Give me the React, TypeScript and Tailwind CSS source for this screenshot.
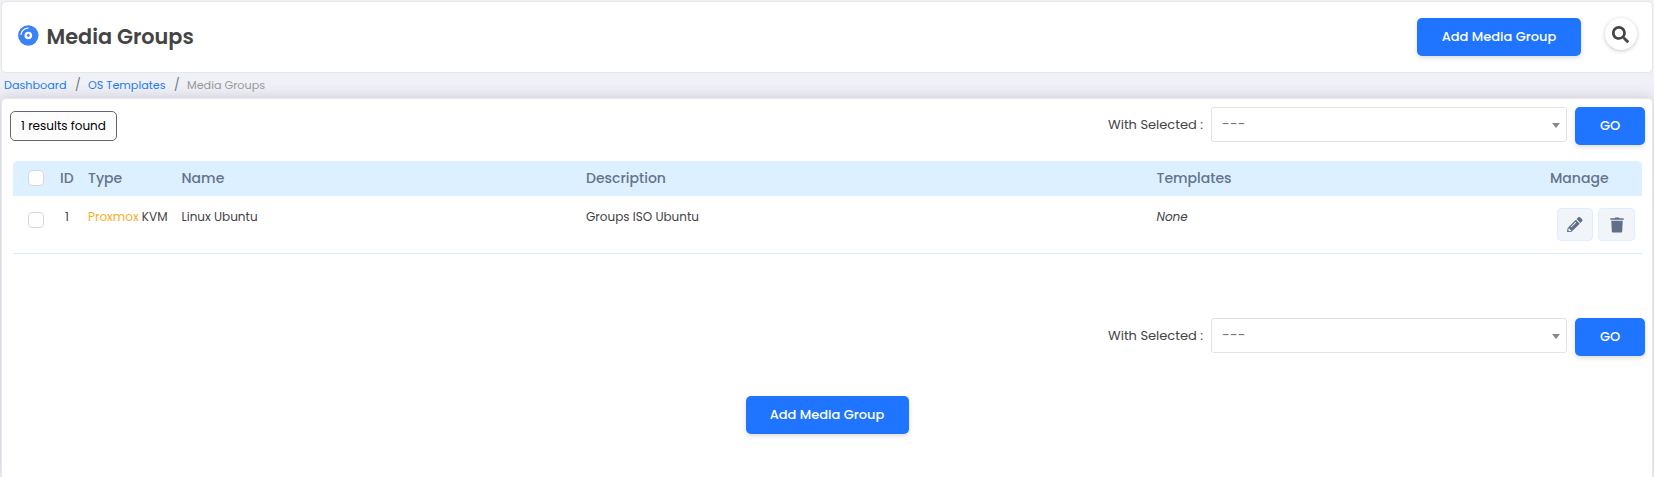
import { FaSearch, FaPencilAlt } from "react-icons/fa";
import type { ReactNode } from "react";

function DiscIcon() {
  return (
    <svg viewBox="0 0 21 21" className="-mt-[3px] h-[21px] w-[21px]" fill="none">
      <circle cx="10.3" cy="10.5" r="10.2" fill="#3b82f6" />
      <circle cx="10.3" cy="10.5" r="3.8" fill="#fff" />
      <circle cx="10.3" cy="10.5" r="1.4" fill="#3b82f6" />
      <path d="M3 9.5a7.5 7.5 0 0 1 7-6.400" stroke="#fff" strokeWidth="1.2" strokeLinecap="round" />
    </svg>
  );
}

function TrashIcon() {
  return (
    <svg viewBox="0 0 14 16" className="h-4 w-[14px]" fill="currentColor">
      <path d="M4.6 1.3 5.2.4h3.6l.6.9h3.9c.3 0 .5.2.5.5v1H.2v-1c0-.3.2-.5.5-.5z" />
      <path d="M1.3 3.8h11.4l-.5 10.5c0 .8-.6 1.3-1.4 1.3H3.2c-.8 0-1.4-.5-1.4-1.3z" />
    </svg>
  );
}

function PrimaryButton({ children, className }: { children: ReactNode; className: string }) {
  return (
    <button
      className={
        "flex h-[38px] shrink-0 items-center justify-center rounded-[5px] bg-[#1f75ff] text-[13px] font-medium text-white shadow-[0_2px_5px_rgba(0,0,0,0.14)] " +
        className
      }
    >
      {children}
    </button>
  );
}

function Checkbox() {
  return <span className="block h-4 w-4 rounded-[4px] border border-[#d5d7da] bg-white" />;
}

function WithSelected() {
  return (
    <div className="flex items-start">
      <span className="mt-2 w-[103px] whitespace-nowrap text-[13px] leading-5 text-[#444]">With Selected :</span>
      <div className="flex h-[35px] w-[356px] items-center justify-between rounded-[3px] border border-[#e2e2e2] bg-white pr-[6px] pl-[10px]">
        <span className="-mt-px text-[14px] tracking-[0.2px] text-[#777]">---</span>
        <span className="mt-0.5 border-x-4 border-t-[5px] border-x-transparent border-t-[#888]" />
      </div>
      <PrimaryButton className="ml-2 w-[70px]">GO</PrimaryButton>
    </div>
  );
}

export default function App() {
  return (
    <div className="flex h-[477px] flex-col overflow-hidden bg-[#f0f1f7] px-px pt-px font-[Poppins,sans-serif] text-[#444]">
      <header className="flex h-[72px] shrink-0 items-start justify-between rounded-[5px] border border-[#e6e6eb] bg-white pt-4 pr-[15px] pl-4">
        <div className="flex items-center pt-[3px]">
          <DiscIcon />
          <h1 className="ml-[7.5px] text-[20.8px] leading-8 font-semibold text-[#444]">Media Groups</h1>
        </div>
        <div className="flex">
          <PrimaryButton className="w-[164px]">Add Media Group</PrimaryButton>
          <button className="ml-6 flex h-8 w-8 items-center justify-center rounded-full bg-white pr-px text-[#444] shadow-[0_1px_4px_rgba(0,0,0,0.22)]">
            <FaSearch size={17} />
          </button>
        </div>
      </header>
      <nav className="flex h-6 shrink-0 items-center pl-[3px] text-[11.2px]">
        <a className="w-[71px] text-[#1d7cf2]">Dashboard</a>
        <span className="w-[13px] text-[12px] text-[#6c757d]">/</span>
        <a className="w-[86px] text-[#1d7cf2]">OS Templates</a>
        <span className="w-[13px] text-[12px] text-[#6c757d]">/</span>
        <span className="text-[#999]">Media Groups</span>
      </nav>
      <main className="mt-px flex flex-1 flex-col rounded-t-[5px] border border-b-0 border-[#e6e6eb] bg-white shadow-[0_0_14px_rgba(60,60,80,0.22)]">
        <div className="flex items-start justify-between pt-2 pr-[7px] pl-2">
          <span className="mt-1 flex h-[30px] w-[107px] items-center justify-center rounded-[5px] border border-[#666] bg-[#fdfdfd] text-[12px] text-black">
            1 results found
          </span>
          <WithSelected />
        </div>
        <table className="mt-4 ml-[11px] w-[1629px] table-fixed border-separate border-spacing-0 text-left">
          <colgroup>
            <col className="w-[47px]" />
            <col className="w-[28px]" />
            <col className="w-[93px]" />
            <col className="w-[405px]" />
            <col className="w-[570px]" />
            <col className="w-[394px]" />
            <col className="w-[92px]" />
          </colgroup>
          <thead>
            <tr className="h-[35px] text-[14px] text-[#64748b] *:bg-[#dcf0ff] *:font-medium">
              <th className="rounded-tl-[5px] pb-px pl-[15px]"><Checkbox /></th>
              <th>ID</th>
              <th>Type</th>
              <th className="pl-[0.5px]">Name</th>
              <th>Description</th>
              <th className="pl-[0.5px]">Templates</th>
              <th className="rounded-tr-[5px]">Manage</th>
            </tr>
          </thead>
          <tbody>
            <tr className="h-[58px] text-[12px] leading-5 *:border-b *:border-[#d6ebfb] *:align-top">
              <td className="pt-4 pl-[15px]"><Checkbox /></td>
              <td className="pt-[11px] pl-[5px]">1</td>
              <td className="pt-[11px] whitespace-nowrap"><span className="text-[#f5b01f]">Proxmox</span> KVM</td>
              <td className="pt-[11px] pl-[0.5px]">Linux Ubuntu</td>
              <td className="pt-[11px]">Groups ISO Ubuntu</td>
              <td className="pt-[11px] pl-[0.5px] italic">None</td>
              <td className="pt-3 pl-[7px]">
                <div className="flex gap-[5px] text-[#5f6f88]">
                  <button className="flex h-[33px] w-9 items-center justify-center rounded-[4px] border border-[#e0eefd] bg-[#f1f4f9]"><FaPencilAlt size={15.5} /></button>
                  <button className="flex h-[33px] w-[37px] items-center justify-center rounded-[4px] border border-[#e0eefd] bg-[#f1f4f9]"><TrashIcon /></button>
                </div>
              </td>
            </tr>
          </tbody>
        </table>
        <div className="mt-16 flex justify-end pr-[7px]">
          <WithSelected />
        </div>
        <div className="mt-10 flex justify-center">
          <PrimaryButton className="w-[163px]">Add Media Group</PrimaryButton>
        </div>
      </main>
    </div>
  );
}
